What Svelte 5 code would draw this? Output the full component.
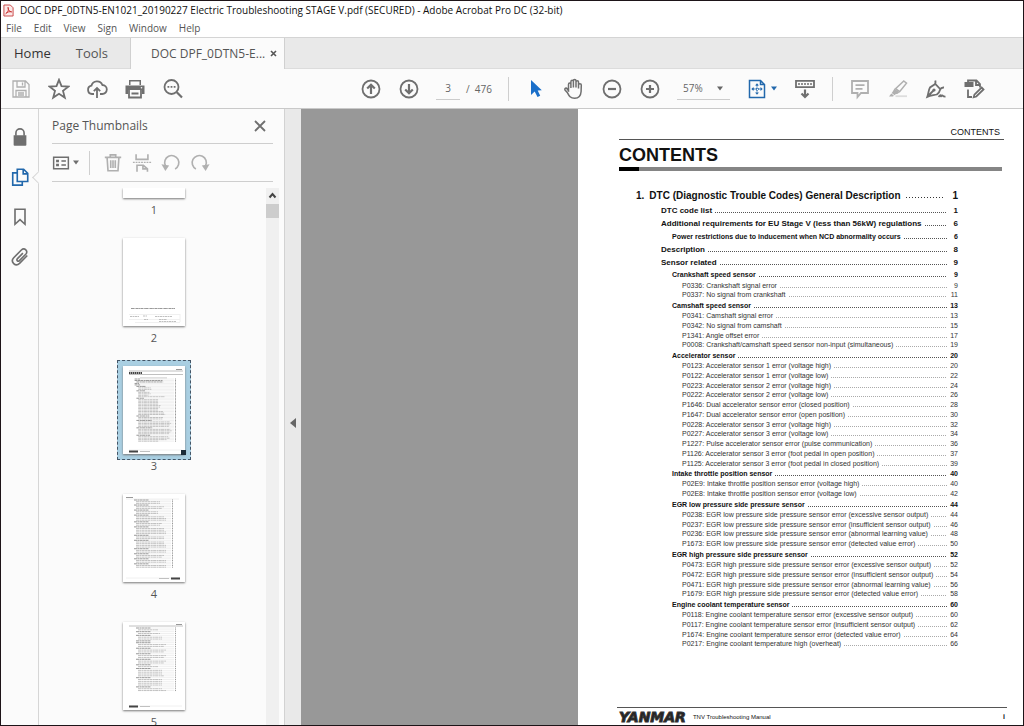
<script>
  const menus = ['File', 'Edit', 'View', 'Sign', 'Window', 'Help'];

  // level, title, page
  const intro = [
    [2, 'DTC code list', 1],
    [2, 'Additional requirements for EU Stage V (less than 56kW) regulations', 6],
    [3, 'Power restrictions due to inducement when NCD abnormality occurs', 6],
    [2, 'Description', 8],
    [2, 'Sensor related', 9]
  ];

  const entries = [
    [3, 'Crankshaft speed sensor', 9],
    [4, 'P0336: Crankshaft signal error', 9],
    [4, 'P0337: No signal from crankshaft', 11],
    [3, 'Camshaft speed sensor', 13],
    [4, 'P0341: Camshaft signal error', 13],
    [4, 'P0342: No signal from camshaft', 15],
    [4, 'P1341: Angle offset error', 17],
    [4, 'P0008: Crankshaft/camshaft speed sensor non-input (simultaneous)', 19],
    [3, 'Accelerator sensor', 20],
    [4, 'P0123: Accelerator sensor 1 error (voltage high)', 20],
    [4, 'P0122: Accelerator sensor 1 error (voltage low)', 22],
    [4, 'P0223: Accelerator sensor 2 error (voltage high)', 24],
    [4, 'P0222: Accelerator sensor 2 error (voltage low)', 26],
    [4, 'P1646: Dual accelerator sensor error (closed position)', 28],
    [4, 'P1647: Dual accelerator sensor error (open position)', 30],
    [4, 'P0228: Accelerator sensor 3 error (voltage high)', 32],
    [4, 'P0227: Accelerator sensor 3 error (voltage low)', 34],
    [4, 'P1227: Pulse accelerator sensor error (pulse communication)', 36],
    [4, 'P1126: Accelerator sensor 3 error (foot pedal in open position)', 37],
    [4, 'P1125: Accelerator sensor 3 error (foot pedal in closed position)', 39],
    [3, 'Intake throttle position sensor', 40],
    [4, 'P02E9: Intake throttle position sensor error (voltage high)', 40],
    [4, 'P02E8: Intake throttle position sensor error (voltage low)', 42],
    [3, 'EGR low pressure side pressure sensor', 44],
    [4, 'P0238: EGR low pressure side pressure sensor error (excessive sensor output)', 44],
    [4, 'P0237: EGR low pressure side pressure sensor error (insufficient sensor output)', 46],
    [4, 'P0236: EGR low pressure side pressure sensor error (abnormal learning value)', 48],
    [4, 'P1673: EGR low pressure side pressure sensor error (detected value error)', 50],
    [3, 'EGR high pressure side pressure sensor', 52],
    [4, 'P0473: EGR high pressure side pressure sensor error (excessive sensor output)', 52],
    [4, 'P0472: EGR high pressure side pressure sensor error (insufficient sensor output)', 54],
    [4, 'P0471: EGR high pressure side pressure sensor error (abnormal learning value)', 56],
    [4, 'P1679: EGR high pressure side pressure sensor error (detected value error)', 58],
    [3, 'Engine coolant temperature sensor', 60],
    [4, 'P0118: Engine coolant temperature sensor error (excessive sensor output)', 60],
    [4, 'P0117: Engine coolant temperature sensor error (insufficient sensor output)', 62],
    [4, 'P1674: Engine coolant temperature sensor error (detected value error)', 64],
    [4, 'P0217: Engine coolant temperature high (overheat)', 66]
  ];

  const line = (x, y, w, bold) => ({ x, y, w, bold });

  const page3 = [...intro, ...entries].map(([level, title], i) =>
    line(8 + level * 1.8, 13 + i * 1.48, title.length * 0.42, level < 4)
  );

  const rows = (pattern, x, top, step) =>
    [...pattern].map((c, i) => line(c === 'h' ? x : x + 2, top + i * step, c === 'h' ? 15 : 18 + Number(c) * 2, c === 'h'));

  const page4 = rows('h33h54h22h566h43h5566h55h5566h66h54h66h66', 11, 6, 1.68);
  const page5 = rows('h1h2h33hh54h54h54h54h1h3334h3333h35', 13, 6, 1.84);

  let pageNumber = $state('3');
  let zoom = $state('57%');
  let selected = $state(3);
</script>

{#snippet icon(name)}
  <svg class="icon" viewBox="0 0 22 22" aria-hidden="true">
    {#if name === 'save'}
      <path class="thin" d="M3 3h12.5L19 6.500V19H3zM7 3v6h8V3M6 19v-6.500h10V19M12.500 4.500v3M8 15h6M8 17h6" />
    {:else if name === 'star'}
      <path d="M11 1.800l2.500 6.400 6.800.4-5.300 4.300 1.800 6.700L11 15.800l-5.800 3.800L7 12.900 1.700 8.600l6.800-.4z" />
    {:else if name === 'cloud'}
      <path d="M8 16H6a4.200 4.200 0 0 1-.6-8.300A5.800 5.800 0 0 1 16.400 7a4.500 4.500 0 0 1-.2 9H14M11 20v-9.500M7.800 13.200L11 10l3.200 3.200" />
    {:else if name === 'print'}
      <path class="solid" d="M5 2h12v5H5zM1.500 7.500h19v8.500H18v-4H4v4H1.500z" />
      <path class="paper" d="M6.500 3.500h9V7h-9zM5.500 12.500h11V19h-11z" />
      <path d="M5 12v7.500h12V12M7.500 15.500h7" />
      <circle class="paper" cx="17.500" cy="9.700" r="0.800" />
    {:else if name === 'search'}
      <circle cx="9.500" cy="9" r="7" />
      <path class="bold" d="M14.800 14.300l5.200 5.200" />
      <path class="solid" d="M5.500 8h1.800v1.800H5.500zM8.600 8h1.800v1.800H8.600zM11.700 8h1.800v1.800h-1.800z" />
    {:else if name === 'up'}
      <circle cx="11" cy="11" r="8.500" />
      <path class="bold" d="M11 16V7M7.200 10.500L11 6.700l3.800 3.800" />
    {:else if name === 'down'}
      <circle cx="11" cy="11" r="8.500" />
      <path class="bold" d="M11 6v9M7.200 11.500l3.800 3.800 3.800-3.800" />
    {:else if name === 'minus'}
      <circle cx="11" cy="11" r="8.500" />
      <path class="bold" d="M7 11h8" />
    {:else if name === 'plus'}
      <circle cx="11" cy="11" r="8.500" />
      <path class="bold" d="M7 11h8M11 7v8" />
    {:else if name === 'pointer'}
      <path class="solid" d="M6 2v15l3.700-3.400 2.800 5.400 2.700-1.200-2.500-5.200 4.100-.4z" />
    {:else if name === 'hand'}
      <path class="mid" d="M5.500 13.500V6.500c0-2 2.400-2 2.400 0V10V3.800c0-2 2.500-2 2.500 0V9.500V3c0-2 2.600-2 2.600 0v6.500V4c0-1.800 2.500-1.800 2.500 0v6.500V7c0-1.800 2.800-1.800 2.800 0l-.2 6.500c-.3 4.500-2.600 6.800-6.400 6.800-4.500 0-5.700-2.600-7.200-5.500L2 12c-.8-1.700 1.200-2.600 2.300-1l1.700 2.600" />
    {:else if name === 'fit'}
      <path class="mid" d="M3.500 2.500h11l4 4v13h-15zM14.500 2.500v4h4" />
      <path class="thin" stroke-dasharray="1.500 1" d="M11 7v8M7 11h8" />
      <path class="solid" d="M11 5.200l1.900 2.200H9.100zM11 16.800l1.900-2.200H9.100zM5.300 11l2.200-1.900v3.800zM16.700 11l-2.200-1.900v3.800z" />
    {:else if name === 'ruler'}
      <path d="M2 2.800h18v6.400H2z" />
      <path class="mid" d="M5 5v2M8 5v2M11 5v2M14 5v2M17 5v2" />
      <path class="bold" d="M11 11.500V19M7.500 15.500L11 19l3.500-3.500" />
    {:else if name === 'comment'}
      <path d="M3 3h16v12h-7l-3.500 4v-4H3zM6.500 7.200h9M6.500 10.800h7" />
    {:else if name === 'highlight'}
      <path class="mid" d="M16.800 3l2.700 2.100-6.900 8.600-4-3.100z" />
      <path class="solid" d="M7.500 10.500l4.800 3.800-1.500 1.500-2.300.4-.9 1-2.900-2.300.9-1.100zM4.300 15.500l2.500 2-.7 1H2z" />
      <path class="pale" d="M8.500 18.200h11.500" />
    {:else if name === 'pen'}
      <path d="M2.300 18.800C3.500 15.500 3.500 12 5 9.500L10.300 6l5 5.200c-.6 2.500-1.800 4-3.500 5.300-3 .8-6.500 1-9.500 2.300zM3 18l5.500-5.500M9 7c1.500-.8 1.800-2.300 1.300-4.500M15 11.500c.8-1.500 1.800-2.200 4-2" />
      <circle class="solid" cx="9" cy="12" r="1.600" />
      <path d="M13.500 18.800c1.300-1.500 2.500-2.500 2.300-1s1-.8 1.700-.3.400 1.300 3 1.200" />
    {:else if name === 'editdoc'}
      <path class="solid" d="M1.500 4h9v5h-9z" />
      <path d="M5 4V2.500h8.500L17 6v3.500M13 2.500V7h4M5 11.500v7.500h4" />
      <path d="M18.600 9.500l1.900 1.900-7.200 7.100-2.600.7.700-2.600z" />
    {:else if name === 'lock'}
      <path class="solid" d="M4 9h14v10.500q0 1-1 1H5q-1 0-1-1z" />
      <path d="M6.500 9.500V6.500a4.500 4.500 0 0 1 9 0v3" />
    {:else if name === 'pages'}
      <path d="M8 2.500h7l4.500 4.500v9H8zM14.500 2.500v5h5M8 6.500H3v13.500h10.500v-4" />
    {:else if name === 'bookmark'}
      <path d="M5.500 2.500h11V19L11 14l-5.500 5z" />
    {:else if name === 'clip'}
      <path d="M14.200 6.800l-6 6c-1.600 1.800.5 3.800 2.200 2.200l6.900-7c3.400-3.700-1.500-7.900-4.800-4.700l-8.400 8.500c-4.200 4.800 2 10.300 6.400 6.200l8.500-8.600" />
    {:else if name === 'list'}
      <path d="M2 4h18v14H2zM11.500 8.500h5.500M11.500 13.500h5.500" />
      <path class="solid" d="M5 7h3.500v3H5zM5 12h3.500v3H5z" />
    {:else if name === 'trash'}
      <path d="M2 4.800h18M8 4.500V2h6v2.500M4.500 5l1 14.500h11l1-14.500M8.500 8v8.500M11 8v8.500M13.500 8v8.500" />
    {:else if name === 'split'}
      <path d="M4.500 1.500v5.500h13V1.500M5.500 20.500v-7h7l4.500 4v3M12 13.500v4h5" />
      <path class="mid" stroke-dasharray="2 1" d="M1 10.300h20" />
    {:else if name === 'undo'}
      <path d="M15.500 17.500A7.800 7.800 0 1 0 4.800 14" />
      <path class="solid" d="M0.500 12.500l8.500 1.200-4.200 6z" />
    {:else if name === 'redo'}
      <path d="M6.500 17.500A7.800 7.800 0 1 1 17.200 14" />
      <path class="solid" d="M21.500 12.500l-8.500 1.200 4.200 6z" />
    {:else if name === 'close'}
      <path d="M6 6l10 10M16 6L6 16" />
    {/if}
  </svg>
{/snippet}

{#snippet caret()}
  <svg class="caret" viewBox="0 0 8 5" aria-hidden="true"><path d="M1 0.500h6L4 4.500z" /></svg>
{/snippet}

{#snippet tool(name, label, tone = '')}
  <button class="tool {tone}" aria-label={label}>{@render icon(name)}</button>
{/snippet}

{#snippet entry([level, title, page])}
  <li class="entry level{level}">
    <a href="#page-{page}">{title}</a>
    <span class="leader"></span>
    <span class="page">{page}</span>
  </li>
{/snippet}

{#snippet miniLines(lines, end)}
  {#each lines as l}
    <path class={l.bold ? 'dark' : 'soft'} stroke-dasharray="3 0.400 2 0.300" d="M{l.x} {l.y}h{l.w}" />
    <path class="faint" d="M{l.x + l.w} {l.y}H{end - 2}" />
    <path class="dark" d="M{end - 1} {l.y}h1" />
  {/each}
{/snippet}

{#snippet thumb(n)}
  <li>
    <button class="thumb" class:selected={selected === n} aria-label="Page {n}" onclick={() => (selected = n)}>
      {#if n === 1}
        <span class="sheet-end"></span>
      {:else}
        <svg class="mini" viewBox="0 0 62 88" aria-hidden="true">
          {#if n === 2}
            <path class="dark" stroke-dasharray="3 0.400 1 0.300" d="M8 70.500h44" />
            <path class="faint" d="M6 76.500h51M6 81.500h51M57 76v8M12 84.500h45" />
            <path class="soft" stroke-dasharray="2 0.500" d="M7 78.500h9M20 78h4M32 78.500h17M21 81.500h4M36 81.500h8M36 83.500h17" />
          {:else if n === 3}
            <path class="dark" d="M53 3.500h6" />
            <path class="soft" d="M6 5h54M6 8.500h54M17 12h27" />
            <path class="title" stroke-dasharray="1.500 0.500" d="M6 7h13" />
            {@render miniLines(page3, 53)}
            <path class="faint" d="M6 84h53" />
            <path class="title" d="M6 85.500h9" />
            <path class="soft" d="M17 85.500h10" />
          {:else if n === 4}
            <path class="dark" d="M3 3.500h7" />
            <path class="faint" d="M3 5h53" />
            {@render miniLines(page4, 50)}
            <path class="faint" d="M3 84h54" />
            <path class="title" d="M48 84.500h9" />
            <path class="soft" d="M36 84.500h10" />
          {:else}
            <path class="dark" d="M53 2.500h6" />
            <path class="soft" d="M6 4h54" />
            {@render miniLines(page5, 53)}
            <path class="faint" d="M6 84h53" />
            <path class="title" d="M6 84.500h9" />
            <path class="soft" d="M17 84.500h10" />
          {/if}
        </svg>
      {/if}
      {#if selected === n}<span class="handle"></span>{/if}
    </button>
    <span class="number">{n}</span>
  </li>
{/snippet}

<div class="window">
  <header class="titlebar">
    <svg class="logo" viewBox="0 0 12 14" aria-hidden="true">
      <path class="leaf" d="M1 1h7l3 3v9H1z" />
      <path class="curve" d="M5.500 3.500c1.500 2.500-.5 5.500-2.500 7M5.500 3.500c-.5 3 1.500 4.500 4 5M3 10.500c1.500-2 4-2.500 6.500-2" />
    </svg>
    <span>DOC DPF_0DTN5-EN1021_20190227 Electric Troubleshooting STAGE V.pdf (SECURED) - Adobe Acrobat Pro DC (32-bit)</span>
  </header>

  <nav class="menubar" aria-label="Menu">
    {#each menus as m}<button>{m}</button>{/each}
  </nav>

  <nav class="tabs" aria-label="Tabs">
    <button class="tab home">Home</button>
    <button class="tab tools">Tools</button>
    <div class="doctab">
      <button class="tab">DOC DPF_0DTN5-E...</button>
      <button class="shut" aria-label="Close tab">
        <svg viewBox="0 0 7 7" aria-hidden="true"><path d="M1 1l5 5M6 1L1 6" /></svg>
      </button>
    </div>
  </nav>

  <div class="toolbar" role="toolbar" aria-label="Tools">
    {@render tool('save', 'Save', 'muted')}
    {@render tool('star', 'Favourite')}
    {@render tool('cloud', 'Upload')}
    {@render tool('print', 'Print')}
    {@render tool('search', 'Find')}
    <span class="spring"></span>
    {@render tool('up', 'Previous page')}
    {@render tool('down', 'Next page')}
    <label class="pager">
      <input aria-label="Page number" bind:value={pageNumber} />
      <span>/&nbsp; 476</span>
    </label>
    <span class="rule"></span>
    {@render tool('pointer', 'Select', 'active')}
    {@render tool('hand', 'Pan')}
    {@render tool('minus', 'Zoom out')}
    {@render tool('plus', 'Zoom in')}
    <div class="zoom">
      <select aria-label="Zoom level" bind:value={zoom}>
        <option>57%</option>
        <option>100%</option>
      </select>
      {@render caret()}
    </div>
    <button class="tool fit" aria-label="Fit page">{@render icon('fit')}{@render caret()}</button>
    {@render tool('ruler', 'Page display')}
    <span class="rule"></span>
    {@render tool('comment', 'Comment', 'muted')}
    {@render tool('highlight', 'Highlight', 'muted')}
    {@render tool('pen', 'Sign')}
    {@render tool('editdoc', 'Edit document')}
  </div>

  <div class="body">
    <nav class="strip" aria-label="Side panels">
      {@render tool('lock', 'Security')}
      <div class="current">{@render tool('pages', 'Page thumbnails', 'open')}</div>
      {@render tool('bookmark', 'Bookmarks')}
      {@render tool('clip', 'Attachments')}
    </nav>

    <aside class="panel">
      <div class="panelhead">
        <h2>Page Thumbnails</h2>
        {@render tool('close', 'Close panel')}
      </div>
      <div class="paneltools">
        <button class="tool options" aria-label="Options">{@render icon('list')}{@render caret()}</button>
        <span class="rule"></span>
        {@render tool('trash', 'Delete', 'muted')}
        {@render tool('split', 'Split', 'muted')}
        {@render tool('undo', 'Rotate left', 'muted')}
        {@render tool('redo', 'Rotate right', 'muted')}
      </div>
      <div class="scroller">
        <ul class="thumbs">
          {#each [1, 2, 3, 4, 5] as n}{@render thumb(n)}{/each}
        </ul>
        <div class="scrollbar" aria-hidden="true">
          <svg viewBox="0 0 13 16"><path d="M3.500 9.500l3-3.500 3 3.500" /></svg>
          <span></span>
        </div>
      </div>
    </aside>

    <button class="splitter" aria-label="Collapse panel">
      <svg viewBox="0 0 6 10" aria-hidden="true"><path d="M6 0v10L0 5z" /></svg>
    </button>

    <main class="viewer">
      <article class="sheet">
        <p class="running">CONTENTS</p>
        <h1>CONTENTS</h1>
        <div class="chapter"><span>1.</span>
          <a href="#page-1">DTC (Diagnostic Trouble Codes) General Description</a>
          <span class="leader"></span>
          <span class="page">1</span>
        </div>
        <ul class="toc intro">
          {#each intro as e}{@render entry(e)}{/each}
        </ul>
        <ul class="toc codes">
          {#each entries as e}{@render entry(e)}{/each}
        </ul>
        <footer>
          <strong>YANMAR</strong>
          <span>TNV Troubleshooting Manual</span>
          <span class="folio">i</span>
        </footer>
      </article>
    </main>
  </div>
</div>

<style>
  :global(body) {
    margin: 0;
  }

  .window {
    box-sizing: border-box;
    height: 100vh;
    display: flex;
    flex-direction: column;
    border: 1px solid #1d1418;
    background: #fbfbfb;
    color: #555;
    font: 12px/16px 'Open Sans', 'Noto Sans', sans-serif;
    overflow: hidden;
  }

  button,
  input,
  select {
    margin: 0;
    padding: 0;
    border: 0;
    background: none;
    color: inherit;
    font: inherit;
  }

  ul,
  p,
  h1,
  h2 {
    margin: 0;
    padding: 0;
    list-style: none;
  }

  a {
    color: inherit;
    text-decoration: none;
  }

  .titlebar {
    display: flex;
    align-items: center;
    gap: 6px;
    height: 18px;
    flex: none;
    padding-left: 2px;
    background: #fff;
    color: #111;
    font-size: 10px;
    white-space: nowrap;
  }

  .logo {
    width: 11px;
    height: 13px;
    fill: none;
  }

  .leaf {
    fill: #fbe9e9;
    stroke: #c8403f;
  }

  .curve {
    stroke: #c8302f;
  }

  .menubar {
    display: flex;
    align-items: center;
    gap: 12px;
    height: 18px;
    flex: none;
    padding-left: 5px;
    background: #fff;
    font-size: 10px;
  }

  .tabs {
    display: flex;
    height: 30px;
    flex: none;
    background: #e9e9e9;
    border-top: 1px solid #d4d4d4;
    border-bottom: 1px solid #dcdcdc;
    font-size: 13px;
  }

  .home {
    padding-left: 13px;
    color: #333;
  }

  .tools {
    padding: 0 22px 0 25px;
  }

  .doctab {
    display: flex;
    align-items: center;
    gap: 5px;
    margin-bottom: -1px;
    padding: 0 7px 0 20px;
    background: #fbfbfb;
    border: 0 solid #d0d0d0;
    border-width: 0 1px;
    font-size: 12px;
  }

  .shut svg {
    display: block;
    width: 7px;
    height: 7px;
    stroke: #555;
    stroke-width: 1.6;
  }

  .toolbar {
    display: flex;
    align-items: center;
    gap: 16px;
    height: 39px;
    flex: none;
    padding: 0 38px 0 9px;
    border-bottom: 1px solid #c9c9c9;
    color: #666;
  }

  .spring {
    flex: 1;
  }

  .tool {
    display: flex;
    align-items: center;
    flex: none;
    color: #6f6f6f;
  }

  .tool.muted {
    color: #b0b0b0;
  }

  .tool.active {
    color: #1a6fc9;
  }

  .tool.open,
  .tool.fit {
    color: #2268ac;
  }

  .icon {
    display: block;
    width: 22px;
    height: 22px;
    fill: none;
    stroke: currentColor;
    stroke-width: 1.8;
  }

  .icon .thin {
    stroke-width: 1.3;
  }

  .icon .mid {
    stroke-width: 1.5;
  }

  .icon .bold {
    stroke-width: 2.2;
  }

  .icon .solid {
    fill: currentColor;
    stroke: none;
  }

  .icon .paper {
    fill: #fbfbfb;
    stroke: none;
  }

  .icon .pale {
    stroke: #ddd;
  }

  .caret {
    width: 8px;
    height: 5px;
    fill: currentColor;
  }

  .rule {
    width: 1px;
    height: 24px;
    flex: none;
    background: #cfcfcf;
  }

  .pager {
    display: flex;
    align-items: center;
    gap: 6px;
    height: 22px;
    font-size: 10px;
  }

  .pager input {
    width: 24px;
    height: 22px;
    box-sizing: border-box;
    border-bottom: 1px solid #ccc;
    text-align: center;
  }

  .zoom {
    display: flex;
    align-items: center;
    position: relative;
    width: 53px;
    height: 22px;
    box-sizing: border-box;
    border-bottom: 1px solid #ccc;
    font-size: 10px;
  }

  .zoom select {
    appearance: none;
    width: 100%;
    height: 22px;
    padding-left: 6px;
  }

  .zoom .caret {
    position: absolute;
    right: 6px;
    pointer-events: none;
  }

  .fit {
    width: 32px;
    gap: 2px;
  }

  .body {
    display: flex;
    flex: 1;
    min-height: 0;
  }

  .strip {
    display: flex;
    flex-direction: column;
    align-items: center;
    gap: 18px;
    width: 37px;
    flex: none;
    padding-top: 17px;
    border-right: 1px solid #d6d6d6;
  }

  .strip .icon {
    width: 20px;
    height: 22px;
  }

  .current {
    position: relative;
  }

  .current::after {
    content: '';
    position: absolute;
    top: 7px;
    right: -13px;
    width: 8px;
    height: 8px;
    background: #fbfbfb;
    border: solid #d6d6d6;
    border-width: 0 0 1px 1px;
    transform: rotate(45deg);
  }

  .panel {
    display: flex;
    flex-direction: column;
    width: 245px;
    flex: none;
    border-right: 1px solid #d2d2d2;
  }

  .panelhead,
  .paneltools {
    display: flex;
    align-items: center;
    margin: 0 11px 0 13px;
    border-bottom: 1px solid #cecece;
  }

  .panelhead {
    justify-content: space-between;
    height: 34px;
  }

  .panelhead h2 {
    font-size: 12px;
    font-weight: 400;
  }

  .panelhead .tool {
    margin-right: 2px;
  }

  .paneltools {
    gap: 9px;
    height: 37px;
  }

  .paneltools .icon {
    width: 20px;
    height: 20px;
  }

  .paneltools .options .icon {
    width: 18px;
  }

  .options {
    gap: 2px;
  }

  .paneltools .rule {
    margin-right: 4px;
  }

  .scroller {
    display: flex;
    flex: 1;
    min-height: 0;
    margin: 6px 5px 0 3px;
  }

  .thumbs {
    display: flex;
    flex-direction: column;
    gap: 20px;
    flex: 1;
    overflow: hidden;
    font-size: 11px;
  }

  .thumbs li {
    display: flex;
    flex-direction: column;
    align-items: center;
    gap: 4px;
    flex: none;
  }

  .thumb {
    position: relative;
    display: block;
  }

  .thumb.selected {
    margin: -6px;
    padding: 5px;
    background: #a9cfe2;
    border: 1px dashed #456;
  }

  .mini,
  .sheet-end {
    display: block;
    width: 62px;
    background: #fff;
    box-shadow: 0 1px 2px #777;
  }

  .mini {
    height: 88px;
    stroke-width: 1;
    fill: none;
  }

  .sheet-end {
    height: 10px;
  }

  .mini .dark {
    stroke: #999;
  }

  .mini .soft {
    stroke: #c0c0c0;
  }

  .mini .faint {
    stroke: #f0f0f0;
  }

  .mini .title {
    stroke: #444;
    stroke-width: 2;
  }

  .handle {
    position: absolute;
    right: 4px;
    bottom: 4px;
    width: 5px;
    height: 5px;
    background: #1b2b38;
  }

  .scrollbar {
    width: 13px;
    background: #f0f0f0;
  }

  .scrollbar svg {
    display: block;
    width: 13px;
    height: 16px;
    fill: none;
    stroke: #444;
    stroke-width: 2;
  }

  .scrollbar span {
    display: block;
    height: 14px;
    background: #cdcdcd;
  }

  .splitter {
    display: flex;
    align-items: center;
    justify-content: center;
    width: 16px;
    flex: none;
    padding-top: 12px;
    background: #e9e9e9;
  }

  .splitter svg {
    width: 6px;
    height: 10px;
    fill: #666;
  }

  .viewer {
    display: grid;
    grid-template-columns: 277fr 445fr;
    flex: 1;
    background: #989898;
  }

  .sheet {
    grid-column: 2;
    display: flex;
    flex-direction: column;
    min-height: 0;
    padding: 0 19px 0 41px;
    background: #fff;
    color: #111;
    font-family: 'Liberation Sans', Arial, sans-serif;
  }

  .running {
    padding: 16px 4px 0 0;
    border-bottom: 1px solid #555;
    font-size: 9px;
    line-height: 14px;
    text-align: right;
  }

  h1 {
    margin-right: 2px;
    padding-top: 4px;
    border-bottom: 4px solid;
    border-image: linear-gradient(90deg, #000 24px, #858585 24px) 4;
    font-size: 18px;
    line-height: 23px;
  }

  .chapter,
  .entry {
    display: flex;
    align-items: center;
    gap: 3px;
    margin-right: 46px;
    white-space: nowrap;
  }

  .chapter {
    gap: 5px;
    height: 17px;
    margin-top: 16px;
    padding-left: 17px;
    font-size: 10px;
    font-weight: 700;
  }

  .leader {
    flex: 1;
    height: 1px;
    margin: 4px 0 0;
    background: repeating-linear-gradient(90deg, #555 0 1px, transparent 1px 2px);
  }

  .chapter .leader {
    background: repeating-linear-gradient(90deg, #333 0 1px, transparent 1px 3px);
  }

  .page {
    min-width: 8px;
    text-align: right;
  }

  .entry {
    font-weight: 700;
    font-size: 7px;
    line-height: 9px;
  }

  .intro .entry {
    height: 13px;
  }

  .level2 {
    padding-left: 42px;
    font-size: 8px;
  }

  .level3 {
    padding-left: 53px;
  }

  .level4 {
    padding-left: 63px;
    font-weight: 400;
    color: #333;
  }

  .level4 .leader {
    background: repeating-linear-gradient(90deg, #aaa 0 1px, transparent 1px 2px);
  }

  .codes {
    display: flex;
    flex-direction: column;
    flex: 1;
    min-height: 0;
    padding-bottom: 58px;
  }

  .codes .entry {
    flex: 97 0 0;
    min-height: 0;
  }

  .codes .level3 {
    flex-grow: 111;
  }

  footer {
    display: flex;
    align-items: center;
    gap: 7px;
    height: 17px;
    margin: 0 -3px 0 -2px;
    padding: 0 2px;
    border-top: 1px solid #555;
    font-size: 6px;
  }

  footer strong {
    font: italic 700 14px/16px 'DejaVu Sans', sans-serif;
    color: #222;
    -webkit-text-stroke: 1px #333;
  }

  .folio {
    margin-left: auto;
    font-weight: 700;
    font-size: 7px;
  }
</style>
